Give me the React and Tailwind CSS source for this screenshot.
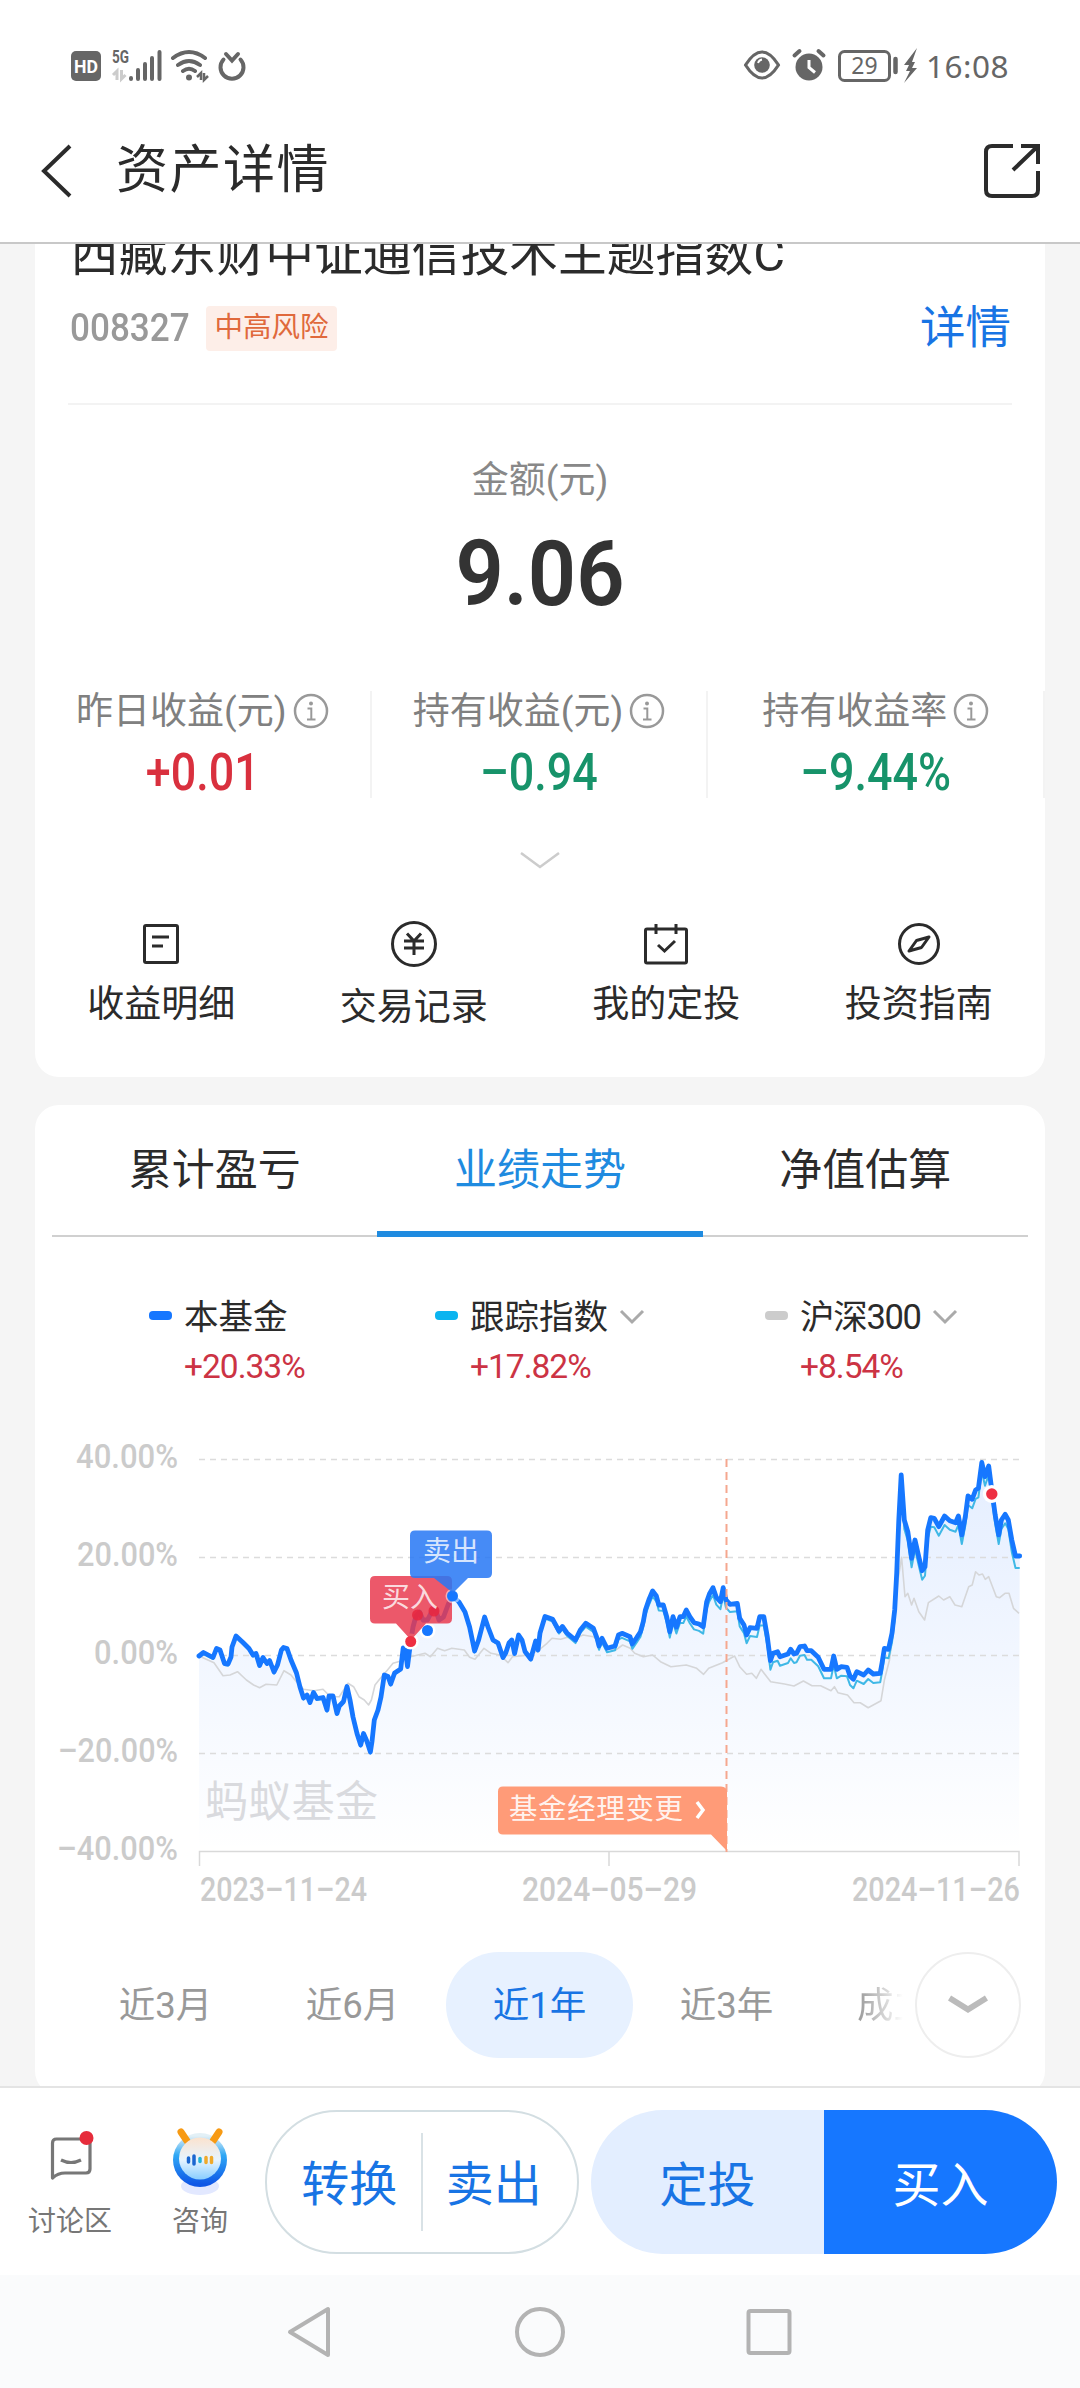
import React from "react";

const fundLine = [
  [199, 236], [203.5, 232.5], [213, 237.5], [216.5, 228.5], [220, 230], [224.5, 243.5], [228, 244], [231, 237], [232, 227], [236, 216],
  [243, 222.5], [249, 228.5], [253, 235], [256, 233.5], [259.6, 245.5], [263, 237.5], [267, 243.5], [269.6, 240.5], [274, 252], [277.5, 245],
  [281.4, 230], [283.5, 227.5], [287, 228.5], [291, 240], [296.5, 253], [300, 267], [303.5, 278], [307, 275], [310, 282.5], [313.5, 272.5],
  [317, 278.5], [323, 277.5], [327, 290], [329, 276], [333, 276], [337, 293.5], [339.3, 286], [343.5, 281.5], [347, 266.5], [350, 280],
  [353, 297], [357, 313.5], [360.7, 325], [363.5, 313.5], [367, 321.5], [370.4, 332], [372, 321.5], [374.3, 300], [378, 290], [381, 277],
  [384.3, 255], [388, 256.5], [390.7, 264], [394.6, 253], [400.7, 249], [403.2, 228], [405.4, 230], [407.5, 246.5], [410.7, 221.3], [413, 207],
  [416, 196], [419.6, 192], [423, 200], [427.5, 200], [431, 193], [435, 188], [439, 200], [443.5, 197], [448, 185], [452, 175.7],
  [459, 182], [465, 192], [469.6, 207], [474.6, 231], [478.6, 220], [484.6, 197], [488, 207], [493, 220], [498, 223], [503, 237.5],
  [505.7, 233], [509, 223], [511.8, 220], [514.6, 233.5], [518.6, 215], [522, 220], [525, 231.5], [530.7, 239], [535.7, 221], [538, 230],
  [540, 213], [545, 196.5], [552.7, 199.3], [559, 211], [562.4, 206.5], [567, 213], [575.5, 220], [580.3, 210], [585.8, 203.3], [593.4, 208.3],
  [597, 218], [599, 226], [602, 218.3], [607, 228.3], [615, 226], [618.5, 215], [622, 213.3], [630, 216.7], [632.3, 224], [636.4, 218],
  [640.5, 211.7], [643.3, 201.7], [645.4, 190], [648.8, 180], [652.6, 171], [656.4, 176], [658.8, 185], [663.3, 185], [666.7, 196.7], [669.8, 211.7],
  [673, 196.7], [676.4, 207.3], [680, 196.7], [683.3, 196.7], [686.3, 190], [689.8, 196.7], [694, 202.7], [699, 204], [703.2, 206.7], [706.7, 181.7],
  [709.4, 174], [713, 167.7], [716.3, 177.3], [720.4, 181.7], [723.2, 167.7], [726, 180], [730, 184.3], [737.3, 183.3], [739.7, 198.3], [744, 205],
  [746.6, 215], [750, 207.7], [757, 208.3], [759.7, 196.7], [763.8, 196.7], [767.3, 216.7], [770.4, 240.7], [773, 233.3], [777.6, 231.7], [780, 236.7],
  [788, 234], [790.7, 229.3], [794, 234], [796.5, 233.3], [800, 226.7], [804.5, 226], [807, 230.7], [811.3, 230.7], [818.2, 237.3], [824, 249.3],
  [831, 249.3], [833.7, 236], [836.8, 249.3], [841.3, 246.7], [847, 247.3], [850, 256], [853.4, 259.3], [856.8, 251.7], [863.7, 255], [868.2, 250],
  [873.3, 254], [880.2, 253.3], [882, 243.3], [884.4, 228.3], [888.5, 229.3], [892, 213.3], [894.7, 190], [896.7, 153.3], [898.8, 100], [901.2, 55],
  [904.3, 100], [907.8, 111.7], [911.6, 138.3], [915, 120], [918.8, 136.7], [922.2, 150.7], [925, 146.7], [927.7, 110], [930.8, 97.7], [934.3, 98.3],
  [938.8, 106.7], [944.6, 96], [949.8, 100.7], [955.6, 102.7], [958.4, 96], [961.8, 115], [965.3, 96.7], [968, 76], [972.2, 79.3], [975.6, 70],
  [978.4, 68.3], [981.8, 42.5], [985, 56.7], [988.7, 46], [991.8, 70], [995.2, 95], [998.7, 115], [1001.4, 100], [1005.2, 94.3], [1008.3, 100],
  [1011.8, 120], [1015.5, 136], [1019.7, 136],
];

const csiLine = [
  [199, 236], [214, 242.7], [223, 255.7], [230, 255], [237.5, 251.7], [246.4, 260], [253.6, 265], [259.6, 267.7], [266, 264.3], [276.8, 265],
  [284, 250.7], [291, 255], [296.4, 261.7], [303.6, 269.3], [314, 270.7], [323, 269.3], [330.4, 276.7], [339.3, 276.7], [348, 263.3], [353.6, 266.7],
  [359, 276.7], [364.3, 280], [368.6, 285], [371.4, 280], [375, 265], [380.4, 258.3], [387.5, 250], [393, 243.3], [401.8, 240.7], [410.7, 236.7],
  [425, 233.3], [430.4, 236.7], [437.5, 228.3], [444.6, 230.7], [451.8, 228.3], [464.3, 230], [469.6, 237.3], [475, 239.3], [484, 228.3], [491, 233.3],
  [500, 235], [508, 242.7], [512.5, 236.7], [528.6, 235], [539, 230], [547, 223.3], [552, 218.3], [560.7, 219.3], [567.5, 217.3], [576, 218.3],
  [583, 215], [593.4, 216.7], [600.3, 223.3], [608.9, 229.3], [615.8, 230], [622.6, 225], [630.2, 228.3], [634.7, 233.3], [643.3, 236.7], [652.6, 235],
  [660.5, 241.7], [670.9, 246.7], [686.3, 245], [696.7, 248.3], [703.6, 254.3], [708.7, 248.3], [722.5, 242.7], [734.6, 236], [739.7, 246.7], [746.6, 254.3],
  [751.8, 253.3], [756.3, 258.3], [761, 249.3], [770.7, 261.7], [784.5, 264], [794, 266], [803.4, 261], [812, 265.7], [820.6, 265.7], [831, 270.7],
  [834.4, 266.7], [837.9, 272.7], [847.5, 275], [854, 282.7], [860.2, 282.7], [868.2, 287.7], [881, 280.7], [884.4, 260], [889.5, 240], [894.7, 200],
  [898, 160], [901.6, 137.3], [905, 176.7], [907.8, 173.3], [911.6, 185], [914, 178.3], [918.8, 191.7], [924.6, 200], [928.4, 182.7], [938.8, 176],
  [943.6, 180], [949.8, 176.7], [955, 185], [961.8, 186.7], [968.7, 166.7], [972.2, 165], [975.6, 151.7], [979, 155], [982.5, 154], [985.3, 159.3],
  [988.7, 156.7], [996.3, 176.7], [999.7, 177.7], [1005, 173.3], [1009, 173.3], [1013.5, 188.3], [1019, 193.3],
];

// The tracked index falls slowly behind the fund over the year
function indexLag(x) {
  if (x < 540) return 1.5;
  if (x < 770) return 2 + ((x - 540) / 230) * 7;
  if (x < 1010) return 9;
  return 12;
}

const indexLine = fundLine.map(([x, y]) => [x, y + indexLag(x)]);

const toPoints = (line) => line.map((p) => p.join(",")).join(" ");

const stats = [
  { label: "昨日收益(元)", value: "+0.01", color: "text-[#d9303e]" },
  { label: "持有收益(元)", value: "–0.94", color: "text-[#17936a]" },
  { label: "持有收益率", value: "–9.44%", color: "text-[#17936a]" },
];

const legends = [
  { name: "本基金", value: "+20.33%", dot: "bg-[#1677ff]", pos: "ml-[114px] w-[286px]", arrow: false },
  { name: "跟踪指数", value: "+17.82%", dot: "bg-[#0bb4f0]", pos: "w-[330px]", arrow: true },
  { name: "沪深300", value: "+8.54%", dot: "bg-[#cccccc]", pos: "w-[230px] tracking-[-1.3px]", arrow: true },
];

const ranges = ["近3月", "近6月", "近1年", "近3年"];

function StatusBar() {
  return (
    <div className="flex h-[100px] items-center justify-between pt-8 pr-[71px] pl-[71px] text-[#666]">
      <svg width="180" height="40" viewBox="71 46 180 40" fill="none" stroke="currentColor">
        <rect x="71" y="51" width="30" height="30" rx="5" fill="currentColor" stroke="none" />
        <text x="86" y="73" fontSize="18" fontWeight="700" fontFamily="Roboto" textAnchor="middle" fill="#fff" stroke="none" textLength="24" lengthAdjust="spacingAndGlyphs">HD</text>
        <text x="112" y="62.5" fontSize="18" fontWeight="700" fontFamily="Roboto" fill="currentColor" stroke="none" textLength="17" lengthAdjust="spacingAndGlyphs">5G</text>
        <path d="M113 75l4-4v9M121.500 70v9l4-4" stroke="#ccc" strokeWidth="3" />
        <path d="M131 78v1M138 70v9M145 64v15M152 58v21M159.500 52v27" strokeWidth="4" strokeLinecap="round" />
        <path d="M173 58q16-12 32 0M178 65q11-8 22 0M183 71q6-4.500 12 0" strokeWidth="4" strokeLinecap="round" />
        <circle cx="189" cy="77.500" r="3" fill="currentColor" stroke="none" />
        <path d="M197 77l4-4v7M204 73v7l4-4" strokeWidth="2.500" />
        <path d="M223.500 59.500a11.500 11.500 0 1 0 17 0" strokeWidth="4" strokeLinecap="round" />
        <path d="M226 54l6 6.500 6-6.500" strokeWidth="4" strokeLinecap="round" />
      </svg>
      <div className="flex items-center">
        <svg width="160" height="40" viewBox="745 46 160 40" fill="none" stroke="currentColor">
          <path d="M747.500 65q16.500-26 33 0q-16.500 26-33 0z" strokeWidth="3.200" strokeLinejoin="round" />
          <circle cx="764" cy="65" r="7.800" fill="currentColor" stroke="none" />
          <path d="M760 63q1-3 4-3.500" stroke="#fff" strokeWidth="1.800" />
          <circle cx="811" cy="67" r="13.500" fill="currentColor" stroke="none" />
          <path d="M811 60v7.500l6 5" stroke="#fff" strokeWidth="3" />
          <path d="M796.500 55.500l5-4.500M825.500 55.500l-5-4.500" strokeWidth="4" strokeLinecap="round" />
          <rect x="841.500" y="51.500" width="50" height="29" rx="5" strokeWidth="3" />
          <text x="866.500" y="74" fontSize="23" fontFamily="Noto Sans" textAnchor="middle" fill="currentColor" stroke="none">29</text>
          <path d="M897.500 59v13" strokeWidth="4.500" strokeLinecap="round" />
        </svg>
        <svg width="16" height="36" viewBox="0 0 16 36" fill="currentColor">
          <path d="M14 0L1 17h5l-3 6h4L1 35l13-15H9l3-6H9z" />
        </svg>
        <span className="ml-[7px] font-['Noto_Sans',sans-serif] text-[31.5px] leading-none tracking-[0.5px]">16:08</span>
      </div>
    </div>
  );
}

function Header() {
  return (
    <header className="flex h-[144px] items-center border-b-2 border-[#c8c8c8] pr-[39px] pl-10">
      <svg width="32" height="56" viewBox="0 0 32 56" fill="none" stroke="#2b2b2b" strokeWidth="4">
        <path d="M30 3L4 28l26 25" />
      </svg>
      <h1 className="ml-[44px] flex-1 text-[52px] leading-none tracking-[1.5px] text-[#2b2b2b]">资产详情</h1>
      <svg width="58" height="56" viewBox="0 0 58 56" fill="none" stroke="#2b2b2b" strokeWidth="4">
        <path d="M30 3H9q-6 0-6 6v38q0 6 6 6h40q6 0 6-6V28" />
        <path d="M38 3h17v18M55 3L30 27" />
      </svg>
    </header>
  );
}

function InfoIcon() {
  return (
    <svg width="36" height="36" viewBox="0 0 36 36" fill="none" stroke="#999" strokeWidth="2.500">
      <circle cx="18" cy="18" r="16" />
      <circle cx="18" cy="10.500" r="2" fill="#999" stroke="none" />
      <path d="M14.500 15.500h3.800V26M14 26.500h8.500" strokeWidth="2" />
    </svg>
  );
}

function SummaryCard() {
  return (
    <section className="h-[833px] rounded-b-[24px] bg-white">
      {/* Fund name is scrolled half under the header */}
      <h2 className="h-[48px] pl-[35px] text-[48.8px] leading-[21px] whitespace-nowrap text-[#2b2b2b]">
        西藏东财中证通信技术主题指数C
      </h2>
      <div className="mt-[9px] flex h-[54px] items-center pr-[34px] pl-[35px]">
        <span className="w-[119px] origin-left scale-x-90 text-[39px] leading-none font-medium whitespace-nowrap text-[#999]">008327</span>
        <span className="ml-[17px] flex h-[45px] items-center rounded-[4px] bg-[#fdeee8] px-[8.5px] text-[28.5px] leading-none text-[#e0693c]">
          中高风险
        </span>
        <span className="ml-auto pt-[2px] text-[45.5px] leading-none text-[#1874e4]">详情</span>
      </div>
      <div className="mx-[33px] mt-[48px] h-[2px] bg-[#f3f3f3]" />

      <div className="mt-[56px] text-center text-[37px] leading-[40px] text-[#888]">金额(元)</div>
      <div className="mt-[28px] scale-x-[0.93] text-center text-[91px] leading-[90px] font-semibold text-[#333]">9.06</div>

      <div className="mt-[72px] grid h-[105px] grid-cols-3">
        {stats.map((item) => (
          <div key={item.label} className="flex flex-col items-center border-r-2 border-[#f3f3f3]">
            <div className="flex h-[40px] items-center gap-[6px] text-[37px] leading-none text-[#808080]">
              <span>{item.label}</span>
              <InfoIcon />
            </div>
            <div className={`mt-[17px] scale-x-[0.88] text-[51px] leading-[50px] font-medium ${item.color}`}>
              {item.value}
            </div>
          </div>
        ))}
      </div>

      <svg className="mx-auto mt-[55px] block" width="42" height="20" viewBox="0 0 42 20" fill="none" stroke="#ccc" strokeWidth="2.500">
        <path d="M2 2l19 14L40 2" />
      </svg>

      <div className="mt-[47px] grid grid-cols-4 text-[37px] leading-[40px] text-[#2b2b2b]">
        <div className="flex flex-col items-center">
          <svg width="52" height="52" viewBox="-26 -26 52 52" fill="none" stroke="#2b2b2b" strokeWidth="3">
            <rect x="-16.500" y="-18.500" width="33" height="37" rx="1.500" />
            <path d="M-9-7H8M-9 2H2" />
          </svg>
          <span className="mt-[15px]">收益明细</span>
        </div>
        <div className="flex flex-col items-center">
          <svg width="52" height="52" viewBox="-26 -26 52 52" fill="none" stroke="#2b2b2b" strokeWidth="3">
            <circle r="21.500" />
            <path d="M-7-10.500L0-3l7-7.500M0-3v14M-10-3h20M-10 4h20" />
          </svg>
          <span className="mt-[18px]">交易记录</span>
        </div>
        <div className="flex flex-col items-center">
          <svg width="52" height="52" viewBox="-26 -26 52 52" fill="none" stroke="#2b2b2b" strokeWidth="3">
            <rect x="-20.500" y="-15" width="41" height="34" rx="1.500" />
            <path d="M-10-20v10M10-20v10M-8 1l6.500 6L9-3" />
          </svg>
          <span className="mt-[15px]">我的定投</span>
        </div>
        <div className="flex flex-col items-center">
          <svg width="52" height="52" viewBox="-26 -26 52 52" fill="none" stroke="#2b2b2b" strokeWidth="3" strokeLinejoin="round">
            <circle r="19.500" />
            <path d="M10-7L2.500 3.500L-10 7L-2.500-3.500z" />
          </svg>
          <span className="mt-[15px]">投资指南</span>
        </div>
      </div>
    </section>
  );
}

function Chart() {
  return (
    <svg className="block" width="1010" height="490" viewBox="35 0 1010 490" fill="none" fontFamily="Roboto, 'Noto Sans CJK SC', sans-serif">
      <defs>
        <linearGradient id="area" x1="0" y1="40" x2="0" y2="432" gradientUnits="userSpaceOnUse">
          <stop offset="0" stopColor="#1f6fff" stopOpacity="0.120" />
          <stop offset="0.500" stopColor="#1f6fff" stopOpacity="0.060" />
          <stop offset="1" stopColor="#1f6fff" stopOpacity="0" />
        </linearGradient>
      </defs>

      <polygon points={`199,432 ${toPoints(fundLine)} 1019,432`} fill="url(#area)" />

      {[39.5, 137.5, 235.5, 333.5].map((y) => (
        <path key={y} d={`M199 ${y}H1019`} stroke="#dcdcdc" strokeWidth="1.500" strokeDasharray="6 5" />
      ))}
      <path d="M199.500 446V431.500H1019V446M609 432v14" stroke="#d9d9d9" strokeWidth="1.500" />

      <g fill="#cbcbcb" fontSize="33" fontWeight="500" textAnchor="end">
        <text x="178" y="47.500" textLength="102" lengthAdjust="spacingAndGlyphs">40.00%</text>
        <text x="178" y="145.500" textLength="101" lengthAdjust="spacingAndGlyphs">20.00%</text>
        <text x="178" y="243.500" textLength="84" lengthAdjust="spacingAndGlyphs">0.00%</text>
        <text x="178" y="341.500" textLength="120" lengthAdjust="spacingAndGlyphs">–20.00%</text>
        <text x="178" y="439.500" textLength="121" lengthAdjust="spacingAndGlyphs">–40.00%</text>
      </g>
      <g fill="#cbcbcb" fontSize="33" fontWeight="500">
        <text x="200" y="481" textLength="167" lengthAdjust="spacingAndGlyphs">2023–11–24</text>
        <text x="522" y="481" textLength="175" lengthAdjust="spacingAndGlyphs">2024–05–29</text>
        <text x="852" y="481" textLength="168" lengthAdjust="spacingAndGlyphs">2024–11–26</text>
      </g>
      <text x="205" y="397" fontSize="43" fill="#d9dade" textLength="173">蚂蚁基金</text>

      <polyline points={toPoints(csiLine)} stroke="#d5d6d8" strokeWidth="1.600" strokeLinejoin="round" />
      <polyline points={toPoints(indexLine)} stroke="#3fb8e6" strokeWidth="2" strokeLinejoin="round" />
      <polyline points={toPoints(fundLine)} stroke="#1677ff" strokeWidth="4.800" strokeLinejoin="round" strokeLinecap="round" />

      <path d="M726.500 39V432" stroke="#f5a78f" strokeWidth="2" strokeDasharray="8 5" />
      <path d="M503 366.500H721q6 0 6 6V431L711 414.500H503q-5 0-5-5V371.500q0-5 5-5z" fill="#ff9b78" />
      <text x="509" y="399" fontSize="28.500" fill="#fff" fillOpacity="0.900" textLength="174">基金经理变更</text>
      <path d="M697 382l6 8-6 8" stroke="#fff" strokeWidth="3.500" />

      {/* Buy and sell flags */}
      <circle cx="427.500" cy="210.500" r="8" fill="#fff" />
      <circle cx="427.500" cy="210.500" r="5.500" fill="#1677ff" />
      <circle cx="410.700" cy="221.500" r="8" fill="#fff" />
      <path d="M375 156H447q5 0 5 5v37.500q0 5-5 5H426L411 220L396 203.500H375q-5 0-5-5V161q0-5 5-5z" fill="#e8384d" fillOpacity="0.840" />
      <g fill="#e8263e" fillOpacity="0.850">
        <circle cx="417.500" cy="195" r="5.500" />
        <circle cx="434" cy="191" r="5.500" />
      </g>
      <circle cx="410.700" cy="221.500" r="5.500" fill="#ee2f42" />
      <circle cx="453" cy="176" r="7.500" fill="#fff" fillOpacity="0.500" />
      <circle cx="452.500" cy="176" r="5.500" fill="#1677ff" />
      <path d="M415 110.500H487q5 0 5 5v37.500q0 5-5 5H468L453 173L434 158H415q-5 0-5-5V115.500q0-5 5-5z" fill="#2878f5" fillOpacity="0.860" />
      <text x="382" y="187" fontSize="28" fill="#fff" fillOpacity="0.800">买入</text>
      <text x="423" y="141" fontSize="28" fill="#fff" fillOpacity="0.800">卖出</text>

      <circle cx="991.800" cy="74" r="9" fill="#fff" />
      <circle cx="991.800" cy="74" r="5.700" fill="#ee2f42" />
    </svg>
  );
}

function TrendCard() {
  return (
    <section className="mt-7 h-[990px] rounded-[24px] bg-white">
      <div className="mx-[17px] flex h-[132px] border-b-2 border-[#d0d0d0] text-[43px] leading-none text-[#2b2b2b]">
        <div className="flex flex-1 items-center justify-center">累计盈亏</div>
        <div className="-mb-[2px] flex flex-1 items-center justify-center border-b-[6px] border-[#1f8be0] pt-1 text-[#1f8be0]">业绩走势</div>
        <div className="flex flex-1 items-center justify-center">净值估算</div>
      </div>

      <div className="mt-[60px] flex h-[123px]">
        {legends.map((item) => (
          <div key={item.name} className={item.pos}>
            <div className="flex h-[40px] items-center text-[34.5px] leading-none text-[#2b2b2b]">
              <span className={`mr-[12px] mb-[4px] h-[9px] w-[23px] rounded-[4px] ${item.dot}`} />
              <span>{item.name}</span>
              {item.arrow && (
                <svg className="ml-[11px]" width="26" height="16" viewBox="0 0 26 16" fill="none" stroke="#aaa" strokeWidth="3">
                  <path d="M2 2l11 11L24 2" />
                </svg>
              )}
            </div>
            <div className="mt-[13px] pl-[35px] text-[33.500px] leading-[34px] tracking-[-1px] text-[#cc3344]">{item.value}</div>
          </div>
        ))}
      </div>

      <Chart />

      <div className="mt-[42px] flex h-[106px] items-center pl-[37px] text-[36.500px] leading-none text-[#999]">
        {ranges.map((name) => (
          <div
            key={name}
            className={
              name === "近1年"
                ? "flex h-full w-[187px] items-center justify-center rounded-full bg-[#e7f1ff] pt-[3px] text-[#1874e4]"
                : "flex w-[187px] items-center justify-center pt-[3px]"
            }
          >
            {name}
          </div>
        ))}
        <div className="ml-[37px] w-[54px] overflow-hidden bg-linear-to-r from-[#999] to-white to-85% bg-clip-text pt-[3px] whitespace-nowrap text-transparent">
          成立
        </div>
        <div className="ml-[4px] flex size-[106px] items-center justify-center rounded-full border-2 border-[#eee] bg-white">
          <svg width="40" height="22" viewBox="0 0 40 22" fill="none" stroke="#bbb" strokeWidth="6">
            <path d="M1.500 4L20 15.500L38.500 4" />
          </svg>
        </div>
      </div>
    </section>
  );
}

function Mascot() {
  return (
    <svg width="60" height="72" viewBox="0 0 60 72" fill="none">
      <defs>
        <linearGradient id="ring" x1="0" y1="12" x2="0" y2="60" gradientUnits="userSpaceOnUse">
          <stop offset="0" stopColor="#e3f0f6" />
          <stop offset="0.400" stopColor="#2fa8f5" />
          <stop offset="1" stopColor="#0f57e6" />
        </linearGradient>
        <linearGradient id="face" x1="0" y1="14" x2="0" y2="54" gradientUnits="userSpaceOnUse">
          <stop offset="0" stopColor="#fbe3cf" />
          <stop offset="0.550" stopColor="#e6f4ff" />
          <stop offset="1" stopColor="#8fd0ff" />
        </linearGradient>
      </defs>
      <ellipse cx="30" cy="62" rx="19" ry="9" fill="#e2e8ff" />
      <circle cx="30" cy="36" r="27" fill="url(#ring)" />
      <path d="M11 8l6 9M49 8l-6 9" stroke="#f79a14" strokeWidth="7" strokeLinecap="round" />
      <circle cx="30" cy="34.500" r="21" fill="url(#face)" />
      <path d="M18.500 34v4M24 32v8" stroke="#1a66d0" strokeWidth="3.500" strokeLinecap="round" />
      <path d="M30 34.500v3" stroke="#25b4d8" strokeWidth="3.500" strokeLinecap="round" />
      <path d="M36 33.500v5M41.500 33.500v5" stroke="#efa92a" strokeWidth="3.500" strokeLinecap="round" />
    </svg>
  );
}

function ActionBar() {
  return (
    <footer className="flex h-[189px] border-t-2 border-[#e4e4e4] bg-white pt-[22px]">
      <div className="flex w-[140px] flex-col items-center text-[28px] leading-none text-[#777]">
        <svg className="mt-[16px]" width="60" height="56" viewBox="0 0 60 56" fill="none" stroke="#777" strokeWidth="3.200">
          <path d="M12.500 52V17q0-4 4-4H46q4 0 4 4v26q0 4-4 4H25q-7 0-12.500 5z" strokeLinejoin="round" />
          <path d="M21 34q10 5 20 0" />
          <circle cx="46.500" cy="12" r="7" fill="#e62c3b" stroke="none" />
        </svg>
        <span className="mt-[26px]">讨论区</span>
      </div>
      <div className="flex w-[120px] flex-col items-center text-[28px] leading-none text-[#777]">
        <div className="mt-[14px]">
          <Mascot />
        </div>
        <span className="mt-[12px]">咨询</span>
      </div>

      <div className="ml-[5px] flex h-[144px] w-[314px] items-center rounded-full border-2 border-[#d3dee2] text-[48px] leading-none text-[#1874e4]">
        <div className="flex-1 pt-[6px] pl-[11px] text-center">转换</div>
        <div className="h-[98px] w-[2px] bg-[#d9e2e6]" />
        <div className="flex-1 pt-[6px] pr-[12px] text-center">卖出</div>
      </div>

      <div className="ml-[12px] flex h-[144px] w-[466px] overflow-hidden rounded-full text-[48px] leading-none">
        <div className="flex flex-1 items-center justify-center bg-[#e3eeff] pt-[7px] text-[#1874e4]">定投</div>
        <div className="flex flex-1 items-center justify-center bg-[#1677ff] pt-[7px] text-white">买入</div>
      </div>
    </footer>
  );
}

function SystemNav() {
  return (
    <nav className="flex h-[113px] items-center justify-center bg-[#fafbfc]">
      <svg width="520" height="60" viewBox="280 0 520 60" fill="none" stroke="#b3b3b3" strokeWidth="4" strokeLinejoin="round">
        <path d="M328 7v46L290 30z" />
        <circle cx="540" cy="30" r="23" />
        <rect x="748.500" y="9" width="41" height="42" rx="2" />
      </svg>
    </nav>
  );
}

export default function App() {
  return (
    <div className="flex h-[2388px] w-[1080px] flex-col overflow-hidden bg-white font-['Roboto','Noto_Sans_CJK_SC',sans-serif]">
      <StatusBar />
      <Header />
      <main className="h-[1842px] overflow-hidden bg-[#f5f5f5] px-[35px]">
        <SummaryCard />
        <TrendCard />
      </main>
      <ActionBar />
      <SystemNav />
    </div>
  );
}
